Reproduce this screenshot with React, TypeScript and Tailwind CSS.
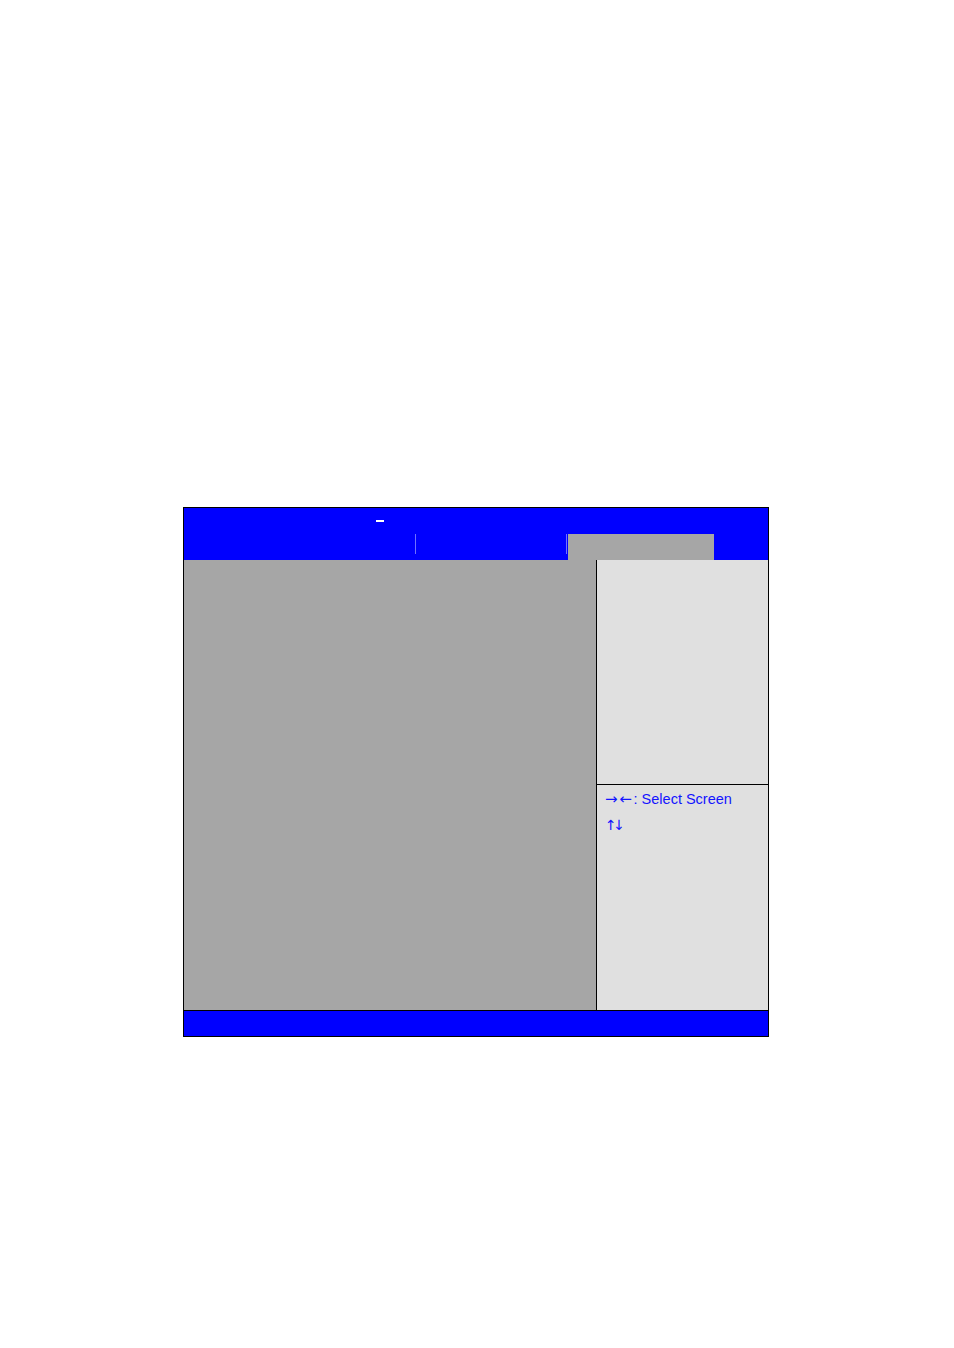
const App = () => {
  return (
    <div className="min-h-[1348px] w-[954px] bg-white pt-[507px] pl-[183px]" style={{ fontFamily: '"Liberation Sans", Arial, sans-serif' }}>
      <div className="w-[586px] border border-black">
        {/* header */}
        <div className="bg-[#0000ff]">
          <div className="relative h-[26px]">
            <span className="absolute left-[192px] top-[12px] block h-[2px] w-[8px] bg-white" aria-label="_" />
          </div>
          <div className="flex h-[26px] items-start">
            <div className="w-[231px]" />
            <div className="h-[20px] w-px bg-[#7070ff]" />
            <div className="w-[150px]" />
            <div className="h-[20px] w-px bg-[#7070ff]" />
            <div className="w-px" />
            <div className="h-[26px] w-[146px] bg-[#a6a6a6]" />
          </div>
        </div>

        {/* body */}
        <div className="flex h-[450px]">
          <div className="w-[413px] border-r border-black bg-[#a6a6a6]" />
          <div className="flex flex-1 flex-col bg-[#e0e0e0]">
            <div className="h-[225px] border-b border-black" />
            <div className="flex-1 pl-[8px] pt-[1px] text-[14.5px] leading-[26px] text-[#1414ff]">
              <div>
                <span style={{ fontFamily: '"DejaVu Sans", sans-serif' }} className="text-[15px] tracking-[1.7px]">→←</span>: Select Screen
              </div>
              <div>
                <span style={{ fontFamily: '"DejaVu Sans", sans-serif' }} className="text-[14px] tracking-[-3.5px]">↑↓</span>
              </div>
            </div>
          </div>
        </div>

        {/* footer */}
        <div className="h-[26px] border-t border-black bg-[#0000ff]" />
      </div>
    </div>
  );
};

export default App;
